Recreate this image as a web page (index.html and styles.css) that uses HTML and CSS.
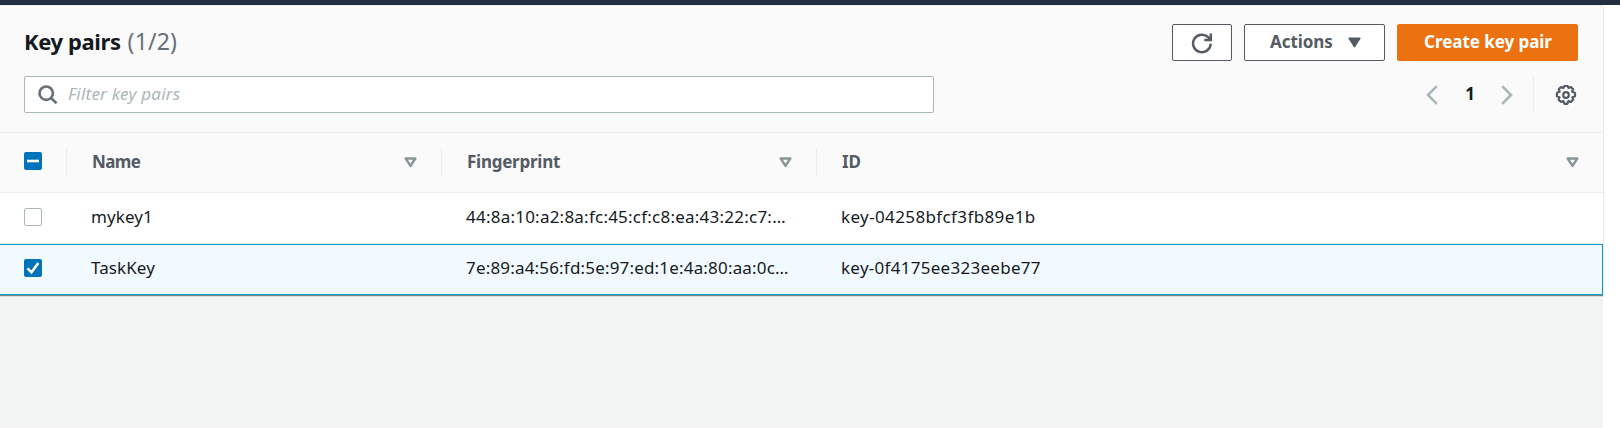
FILE: index.html
```html
<!DOCTYPE html>
<html lang="en">
<head>
<meta charset="utf-8">
<title>Key pairs</title>
<link rel="stylesheet" href="styles.css">
</head>
<body>
<div class="topbar"></div>
<main class="panel">
  <section class="card">
    <header class="card-header">
      <div class="title-row">
        <h1 class="title"><span class="title-text">Key pairs</span><span class="count">(1/2)</span></h1>
        <div class="actions">
          <button class="btn refresh" aria-label="Refresh">
            <svg width="22" height="22" viewBox="0 0 22 22" fill="none" stroke="currentColor" stroke-width="2.5"><path d="M19.7 11.8a8.8 8.8 0 1 1-2.6-6.6L19.4 7.4"/><path d="M13.3 8h6.5V1.4"/></svg>
          </button>
          <button class="btn menu"><span class="menu-text">Actions</span><svg width="13" height="11" viewBox="0 0 13 11"><path d="M1.2 1.2h10.6L6.5 9.6z" fill="currentColor" stroke="currentColor" stroke-width="1.6" stroke-linejoin="round"/></svg></button>
          <button class="btn primary"><span class="create-text">Create key pair</span></button>
        </div>
      </div>
      <div class="filter-row">
        <div class="search">
          <svg width="20" height="20" viewBox="0 0 20 20" fill="none" stroke="currentColor" stroke-width="2.6"><circle cx="8.2" cy="8.2" r="6.7"/><path d="M13 13l5.6 5.3"/></svg>
          <span class="placeholder">Filter key pairs</span>
        </div>
        <div class="pager">
          <svg class="arrow" width="12" height="20" viewBox="0 0 12 20" fill="none" stroke="currentColor" stroke-width="2.6"><path d="M10.8 1.2L2 10l8.8 8.8"/></svg>
          <span class="page">1</span>
          <svg class="arrow" width="12" height="20" viewBox="0 0 12 20" fill="none" stroke="currentColor" stroke-width="2.6"><path d="M1.2 1.2L10 10l-8.8 8.8"/></svg>
          <span class="rule"></span>
          <svg class="gear" width="22" height="22" viewBox="-11 -11 22 22" fill="none" stroke="currentColor" stroke-width="2.2" stroke-linejoin="round"><circle r="2.8"/><path d="M-1.6-9h3.2l.9 1.9 2.4-.9 2.2 2.2-1 2.4 2.9 1.3v3.4l-2.7.9.9 2.4-2.4 2.4-2.3-1-1.2 2.8h-2.8l-1.2-2.8-2.3 1-2.4-2.4.9-2.4-2.6-.9v-3.4l2.8-1.3-1-2.4 2.3-2.2 2.4.9z"/></svg>
        </div>
      </div>
    </header>
    <div class="table">
      <div class="row head">
        <div class="check"><span class="box on"><svg width="18" height="18"><path d="M3 9h12" stroke="#fff" stroke-width="2.6"/></svg></span></div>
        <div class="cell"><span class="h-name">Name</span><svg class="sort" width="13" height="11" viewBox="0 0 13 11"><path d="M1.7 1.5h9.6L6.5 8.9z"/></svg></div>
        <div class="cell"><span class="h-fp">Fingerprint</span><svg class="sort" width="13" height="11" viewBox="0 0 13 11"><path d="M1.7 1.5h9.6L6.5 8.9z"/></svg></div>
        <div class="cell"><span class="h-id">ID</span><svg class="sort" width="13" height="11" viewBox="0 0 13 11"><path d="M1.7 1.5h9.6L6.5 8.9z"/></svg></div>
      </div>
      <div class="row first">
        <div class="check"><span class="box"></span></div>
        <div class="cell"><span class="name-a">mykey1</span></div>
        <div class="cell"><span class="fp-a">44:8a:10:a2:8a:fc:45:cf:c8:ea:43:22:c7:…</span></div>
        <div class="cell"><span class="id-a">key-04258bfcf3fb89e1b</span></div>
      </div>
      <div class="row selected">
        <div class="check"><span class="box on"><svg width="18" height="18" fill="none"><path d="M3.5 9.3l4 4 6.8-9.2" stroke="#fff" stroke-width="2.6"/></svg></span></div>
        <div class="cell"><span class="name-b">TaskKey</span></div>
        <div class="cell"><span class="fp-b">7e:89:a4:56:fd:5e:97:ed:1e:4a:80:aa:0c…</span></div>
        <div class="cell"><span class="id-b">key-0f4175ee323eebe77</span></div>
      </div>
    </div>
  </section>
</main>
</body>
</html>
```
FILE: styles.css
```css
* { box-sizing: border-box; }
body {
  margin: 0;
  height: 428px;
  overflow: hidden;
  background: #fff;
  color: #16191f;
  font: 17px/24px "Noto Sans", "Open Sans", sans-serif;
}
svg { display: block; flex: none; }
.topbar { height: 5px; background: #232f3e; }
.panel { width: 1603px; height: 423px; background: #f2f3f3; }
.card { background: #fff; box-shadow: 0 1px 1px rgba(0, 28, 36, .5); }
.card-header {
  height: 128px;
  padding: 18px 25px 0 24px;
  background: #fafafa;
  border-top: 1px solid #eaeded;
  border-bottom: 1px solid #eaeded;
}
.title-row, .filter-row, .actions, .pager, .search { display: flex; align-items: center; }
.title-row, .filter-row { justify-content: space-between; height: 37px; }
.filter-row { margin-top: 15px; }
.title { display: flex; gap: 7px; margin: 0; padding-bottom: 4px; font-size: 22px; line-height: 30px; }
.title-text { letter-spacing: -.4px; }
.count { color: #687078; font-size: 23px; font-weight: 400; letter-spacing: .2px; }
.actions { gap: 12px; }
.btn {
  display: flex;
  align-items: center;
  justify-content: center;
  height: 37px;
  padding: 0;
  border: 1px solid #545b64;
  border-radius: 2px;
  background: #fff;
  color: #545b64;
  font: 700 17px/24px "Noto Sans", "Open Sans", sans-serif;
  white-space: nowrap;
}
.refresh { width: 60px; }
.menu { width: 141px; justify-content: space-between; padding: 0 23px 0 25px; }
.menu-text, .create-text { padding-bottom: 2px; }
.menu-text { letter-spacing: -.05px; }
.primary { width: 181px; border-color: #ec7211; background: #ec7211; color: #fff; }
.create-text { padding-left: 1px; letter-spacing: -.05px; }
.search {
  width: 910px;
  height: 37px;
  padding-left: 13px;
  gap: 10px;
  border: 1px solid #aab7b8;
  border-radius: 2px;
  background: #fff;
  color: #687078;
}
.placeholder { padding-bottom: 1px; color: #aab7b8; font-style: italic; letter-spacing: .22px; }
.pager { height: 37px; padding-right: 1px; }
.arrow { color: #aab7b8; }
.page { width: 63px; padding: 0 0 2px 1px; text-align: center; font-weight: 700; font-size: 17px; }
.rule { width: 1px; height: 37px; margin: 0 21px 0 20px; background: #eaeded; }
.gear { color: #545b64; }
.row {
  display: grid;
  grid-template-columns: 66px 375px 375px 1fr;
  align-items: center;
  height: 51px;
}
.head { height: 60px; background: #fafafa; border-bottom: 1px solid #eaeded; color: #545b64; font-weight: 700; }
.first { border-bottom: 1px solid #eaeded; }
.check { padding: 0 0 3px 24px; }
.head .check { padding-bottom: 4px; }
.box { display: block; width: 18px; height: 18px; border: 1px solid #aab7b8; border-radius: 2px; background: #fff; }
.on { border: 0; background: #0073bb; }
.cell { display: flex; align-items: center; justify-content: space-between; padding: 0 0 3px 25px; white-space: nowrap; }
.head .cell { height: 29px; padding: 0 24px 0 25px; border-left: 1px solid #eaeded; }
.head .cell span { padding-bottom: 2px; }
.sort { fill: none; stroke: #879596; stroke-width: 2.4; stroke-linejoin: round; }
.h-name { letter-spacing: -.6px; }
.h-fp { letter-spacing: -.25px; }
.name-a, .name-b { letter-spacing: .1px; }
.fp-a { letter-spacing: .23px; }
.fp-b { letter-spacing: .18px; }
.id-a { letter-spacing: .38px; }
.id-b { letter-spacing: .28px; }
.selected { box-shadow: inset 0 1px #00a1c9, inset -1px -1px #00a1c9; background: #f1faff; }
```
